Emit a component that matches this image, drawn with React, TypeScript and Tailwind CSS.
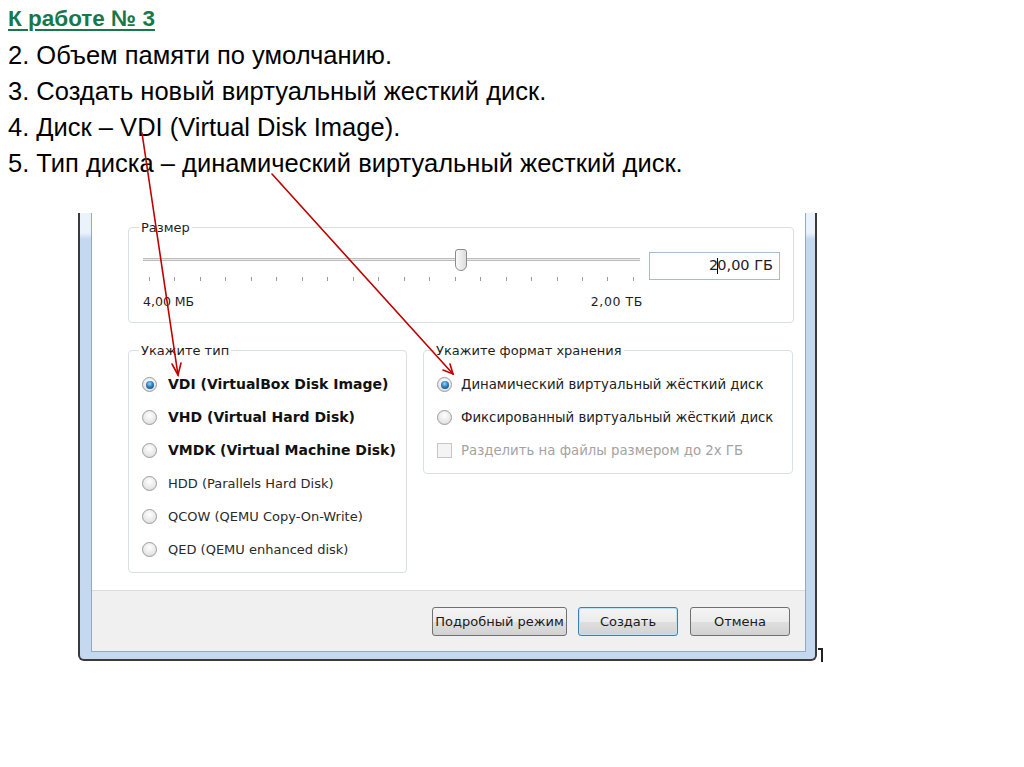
import React from "react";

const steps = [
  "2. Объем памяти по умолчанию.",
  "3. Создать новый виртуальный жесткий диск.",
  "4. Диск – VDI (Virtual Disk Image).",
  "5. Тип диска – динамический виртуальный жесткий диск.",
];

const diskTypes = [
  { label: "VDI (VirtualBox Disk Image)", bold: true, checked: true },
  { label: "VHD (Virtual Hard Disk)", bold: true },
  { label: "VMDK (Virtual Machine Disk)", bold: true },
  { label: "HDD (Parallels Hard Disk)" },
  { label: "QCOW (QEMU Copy-On-Write)" },
  { label: "QED (QEMU enhanced disk)" },
];

const ticks = Array.from({ length: 20 });

const Radio = ({ checked }: { checked?: boolean }) => (
  <span className="flex h-[15px] w-[15px] shrink-0 items-center justify-center rounded-full border border-[#9c9c9c] bg-[radial-gradient(circle_at_50%_35%,#ffffff_0%,#e6e6e6_65%,#cdcdcd_100%)]">
    {checked && (
      <span className="h-[8px] w-[8px] rounded-full bg-[radial-gradient(circle_at_45%_35%,#9ad6f7_0%,#2b80c2_45%,#0c3a66_100%)]" />
    )}
  </span>
);

const Group = ({ title, className, children }: { title: string; className: string; children: React.ReactNode }) => (
  <fieldset className={`rounded-[4px] border border-[#d9dfe4] ${className}`}>
    <legend className="ml-[10px] px-[2px] text-[13px] leading-[15px] text-[#1e1e1e]">{title}</legend>
    {children}
  </fieldset>
);

const btn =
  "h-[29px] rounded-[3px] border text-[13px] text-[#1a1a1a] bg-[linear-gradient(to_bottom,#f4f4f4_0%,#ececec_50%,#dfdfdf_51%,#d2d2d2_100%)]";

const App = () => {
  return (
    <div className="relative h-[767px] w-[1024px] overflow-hidden bg-white font-['Liberation_Sans',Arial,sans-serif] text-black">
      <div className="pl-[8px] pt-[1px]">
        <div className="text-[22.5px] font-bold leading-9 text-[#17784a] underline decoration-2 underline-offset-[3px]">
          К работе № 3
        </div>
        {steps.map((s, i) => (
          <div key={i} className="text-[25.5px] leading-9">
            {s}
          </div>
        ))}
      </div>

      {/* dialog */}
      <div className="ml-[78px] mt-[32px] w-[739px] rounded-b-[6px] border-x-2 border-b-2 border-[#3a3a3a] bg-[linear-gradient(to_bottom,#eaf2fb_0px,#eaf2fb_20px,#c4d9ef_26px,#c4d9ef_100%)] pb-[7px] pl-[11px] pr-[9px] font-['DejaVu_Sans',Verdana,sans-serif]">
        <div className="border-x border-b border-[#94a9be]">
          <div className="h-[377px] bg-white pl-[36px] pr-[12px] pt-[7px]">
            <Group title="Размер" className="h-[103px] w-[666px]">
              <div className="flex">
                <div className="ml-[14px] w-[497px] pt-[14px]">
                  <div className="relative h-[22px]">
                    <div className="absolute left-0 right-0 top-[9px] h-[3px] border-y border-[#bdbdbd] bg-[#e9e9e9]" />
                    <div className="absolute left-[312px] top-0 h-[22px] w-[12px] rounded-t-[3px] rounded-b-[6px] border border-[#8a8a8a] bg-[linear-gradient(to_right,#fafafa,#dcdcdc)]" />
                  </div>
                  <div className="mt-[6px] flex justify-between px-[6px]">
                    {ticks.map((_, i) => (
                      <span key={i} className="h-[4px] w-px bg-[#9a9a9a]" />
                    ))}
                  </div>
                  <div className="mt-[13px] flex justify-between text-[12.5px] leading-[15px] text-[#1e1e1e]">
                    <span>4,00 МБ</span>
                    <span className="mr-[-3px] tracking-[0.6px]">2,00 ТБ</span>
                  </div>
                </div>
                <div className="ml-[9px] mt-[17px] flex h-[28px] w-[131px] items-center justify-end border border-[#a9bccf] pr-[6px] text-[14.5px] text-[#1e1e1e]">
                  2<span className="mx-[-1px] inline-block h-[16px] w-px bg-black" />0,00 ГБ
                </div>
              </div>
            </Group>

            <div className="mt-[20px] flex">
              <Group title="Укажите тип" className="h-[230px] w-[279px]">
                <div className="pl-[13px] pt-[10px]">
                  {diskTypes.map((d, i) => (
                    <div key={i} className="flex h-[33px] items-center gap-[11px]">
                      <Radio checked={d.checked} />
                      <span className={d.bold ? "text-[14px] font-bold text-[#111]" : "text-[13px] text-[#2a2a2a]"}>
                        {d.label}
                      </span>
                    </div>
                  ))}
                </div>
              </Group>
              <Group title="Укажите формат хранения" className="ml-[16px] h-[131px] w-[370px]">
                <div className="pl-[13px] pt-[10px] text-[13.3px]">
                  <div className="flex h-[33px] items-center gap-[9px]">
                    <Radio checked />
                    <span className="text-[#222]">Динамический виртуальный жёсткий диск</span>
                  </div>
                  <div className="flex h-[33px] items-center gap-[9px]">
                    <Radio />
                    <span className="text-[#222]">Фиксированный виртуальный жёсткий диск</span>
                  </div>
                  <div className="flex h-[33px] items-center gap-[9px]">
                    <span className="h-[15px] w-[15px] shrink-0 border border-[#c6c6c6] bg-[#f4f4f4]" />
                    <span className="text-[#a3a3a3]">Разделить на файлы размером до 2х ГБ</span>
                  </div>
                </div>
              </Group>
            </div>
          </div>

          <div className="flex h-[61px] items-start justify-end gap-[11px] border-t border-[#dcdcdc] bg-[#f0f0f0] pr-[15px] pt-[16px]">
            <button className={`${btn} w-[135px] border-[#707070]`}>Подробный режим</button>
            <button className={`${btn} w-[100px] border-[#3c7fb1] shadow-[inset_0_0_0_1px_#bfe4f8]`}>Создать</button>
            <button className={`${btn} ml-[1px] w-[100px] border-[#707070]`}>Отмена</button>
          </div>
        </div>
      </div>

      {/* annotation arrows */}
      <svg className="pointer-events-none absolute left-0 top-0" width="1024" height="767">
        <g stroke="#c00000" strokeWidth="1.6" fill="none" strokeLinecap="round">
          <line x1="142" y1="133" x2="178" y2="375" />
          <polyline points="172,364 178,375 181,363" />
          <line x1="272" y1="174" x2="453" y2="374" />
          <polyline points="443,370 453,374 450,364" />
        </g>
        <path d="M818 648 h5 v14 h-2 v-12 h-3 z" fill="#222" />
      </svg>
    </div>
  );
};

export default App;
